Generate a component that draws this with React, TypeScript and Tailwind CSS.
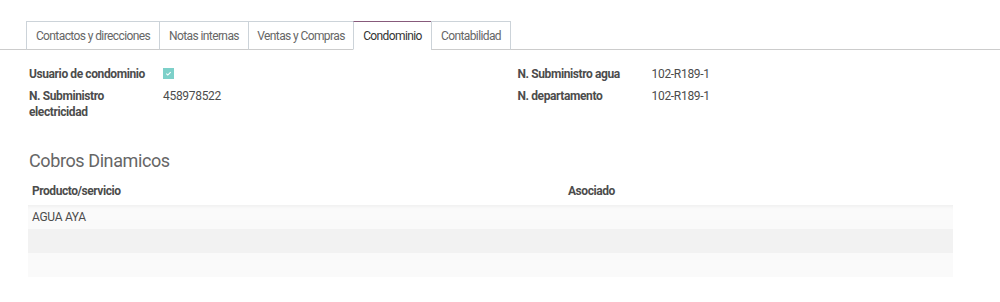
import React from "react";

const tabs = [
  { label: "Contactos y direcciones", w: "w-[134px]" },
  { label: "Notas internas", w: "w-[90px]" },
  { label: "Ventas y Compras", w: "w-[106px]" },
  { label: "Condominio", w: "w-[79px]" },
  { label: "Contabilidad", w: "w-[80px]" },
];

const font = { fontFamily: "Roboto, 'Noto Sans', sans-serif" };

const Field: React.FC<{ label: string; children?: React.ReactNode }> = ({
  label,
  children,
}) => (
  <div className="flex items-start">
    <div className="w-[134px] shrink-0 pr-2 font-bold text-[12px] tracking-[-0.4px] leading-[16px] text-[#4c4c4c]">
      {label}
    </div>
    <div className="text-[12px] tracking-[-0.3px] leading-[16px] text-[#4c4c4c]">{children}</div>
  </div>
);

const App: React.FC = () => {
  const active = "Condominio";
  return (
    <div className="w-[1000px] h-[302px] bg-white" style={font}>
      <div className="pt-[21px] flex border-b border-[#ccc] pl-[26px]">
        {tabs.map((t) => (
          <div
            key={t.label}
            className={
              (t.label === active
                ? "text-[#333] bg-white border-b-white border-t-[#875a7b] "
                : "text-[#666] border-b-[#ccc] ") +
              t.w +
              " h-[29px] -mb-px -ml-px first:ml-0 flex items-center justify-center whitespace-nowrap text-[12px] tracking-[-0.6px] border border-[#ccd3d9]"
            }
          >
            {t.label}
          </div>
        ))}
      </div>

      <div className="grid grid-cols-2 pl-[29px] pt-[16px]">
        <div className="flex flex-col gap-[6px]">
          <Field label="Usuario de condominio">
            <div className="w-[11px] h-[11px] mt-[2px] bg-[#7dd0c9] flex items-center justify-center">
              <svg width="7" height="7" viewBox="0 0 8 8">
                <path d="M1.5 4.2 L3.2 5.8 L6.5 2.5" stroke="white" strokeWidth="1.3" fill="none" />
              </svg>
            </div>
          </Field>
          <Field label="N. Subministro electricidad">458978522</Field>
        </div>
        <div className="flex flex-col gap-[6px] pl-[3px]">
          <Field label="N. Subministro agua">102-R189-1</Field>
          <Field label="N. departamento">102-R189-1</Field>
        </div>
      </div>

      <div className="pl-[28px] pr-[47px]">
        <div className="mt-[30px] pl-[1px] text-[18px] tracking-[-0.4px] leading-[22px] text-[#666]">
          Cobros Dinamicos
        </div>
        <div className="mt-[5px] flex h-[28px] items-center text-[12px] tracking-[-0.45px] font-bold text-[#4c4c4c]">
          <div className="w-[540px] pl-[4px]">Producto/servicio</div>
          <div>Asociado</div>
        </div>
        <div className="h-[24px] flex items-center pl-[4px] bg-[#fafafa] text-[12px] tracking-[-0.3px] text-[#4c4c4c] shadow-[inset_0_4px_4px_-3px_rgba(0,0,0,0.06)]">
          AGUA AYA
        </div>
        <div className="h-[24px] bg-[#f2f2f2]" />
        <div className="h-[24px] bg-[#fafafa]" />
      </div>
    </div>
  );
};

export default App;
